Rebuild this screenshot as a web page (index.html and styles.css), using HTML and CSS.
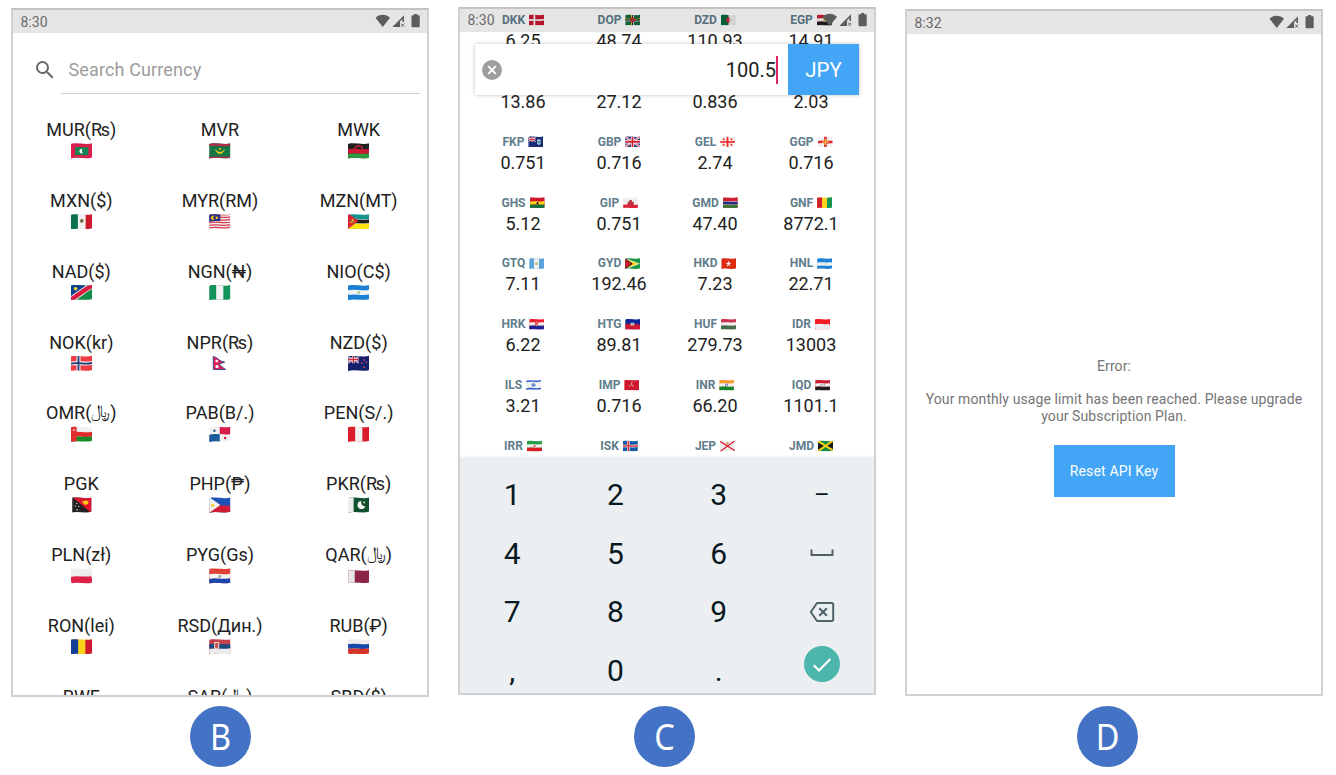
FILE: index.html
```html
<!DOCTYPE html>
<html lang="en">
<head>
<meta charset="utf-8">
<title>Currency converter screens</title>
<link rel="stylesheet" href="styles.css">
</head>
<body>
<svg class="sprite" width="0" height="0" aria-hidden="true">
<defs>
<clipPath id="wave" clipPathUnits="objectBoundingBox"><path d="M0 .09C.33-.02 .67 .17 1 .05V.93C.67 1.06 .33 .88 0 1Z"/></clipPath>
<path id="t" d="M0 4c7-2.5 14 1.5 21-1" stroke-width="5.4" fill="none"/>
<path id="m" d="M0 8.700c7-2 14 1.300 21-.8" stroke-width="4.700" fill="none"/>
<path id="b" d="M0 13.800c7-2 14 1.300 21-.8" stroke-width="5.600" fill="none"/>
<path id="h" d="M0 13c7-2 14 1.300 21-.8" stroke-width="8.500" fill="none"/>
<path id="n" d="M0 8.700c7-2 14 1.300 21-.8" stroke-width="2.400" fill="none"/>
<g id="jack"><path d="M0 0h21v16H0z" fill="#1b2f7c"/><path d="M0 1l21 14M0 15L21 1" stroke="#fff" stroke-width="3"/><path d="M0 1l21 14M0 15L21 1" stroke="#cf2338" stroke-width="1.2"/><path d="M10.500 0v16M0 8h21" stroke="#fff" stroke-width="4.600"/><path d="M10.500 0v16M0 8h21" stroke="#cf2338" stroke-width="2.600"/></g>
</defs>
<symbol id="mv" viewBox="0 0 21 16" preserveAspectRatio="none"><path d="M0 0h21v16H0z" fill="#dc1f4b"/><path d="M4 4.300c5-1 9 .5 13-.3v8c-4 1-8-.6-13 .4z" fill="#168350"/><path d="M11.300 6.200a2.200 2.200 0 1 0 0 4 3 3 0 0 1 0-4" fill="#fff"/></symbol>
<symbol id="mr" viewBox="0 0 21 16" preserveAspectRatio="none"><path d="M0 0h21v16H0z" fill="#167544"/><path d="M0 2c7-2 14 1.300 21-.8M0 15.300c7-2 14 1.300 21-.8" stroke="#b22c4a" stroke-width="2.600" fill="none"/><path d="M6.500 6.500c1 5.500 7 5.500 8.500 0-1.500 3.700-7 3.700-8.500 0" fill="#f2ce20" stroke="#f2ce20" stroke-width=".6"/><circle cx="10.700" cy="6" r="1" fill="#f2ce20"/></symbol>
<symbol id="mw" viewBox="0 0 21 16" preserveAspectRatio="none"><path d="M0 0h21v16H0z" fill="#202020"/><use href="#m" stroke="#cf1834"/><use href="#b" stroke="#2e9b3f"/><path d="M7 6a3.500 3.500 0 0 1 7 .4" fill="none" stroke="#c4203a" stroke-width="1.500"/></symbol>
<symbol id="mx" viewBox="0 0 21 16" preserveAspectRatio="none"><path d="M0 0h21v16H0z" fill="#f1f1f1"/><path d="M0 0h6.700v16H0z" fill="#0a7050"/><path d="M14.300 0H21v16h-6.700z" fill="#cf1a2e"/><circle cx="10.500" cy="8" r="2" fill="#8a8664"/><circle cx="10.500" cy="7.500" r=".9" fill="#6b452f"/></symbol>
<symbol id="my" viewBox="0 0 21 16" preserveAspectRatio="none"><path d="M0 0h21v16H0z" fill="#f1f1f1"/><path d="M0 2c7-2 14 1.300 21-.8M0 4.600c7-2 14 1.300 21-.8M0 7.200c7-2 14 1.300 21-.8M0 9.800c7-2 14 1.300 21-.8M0 12.400c7-2 14 1.300 21-.8M0 15c7-2 14 1.300 21-.8" stroke="#d83c50" stroke-width="1.250" fill="none"/><path d="M0 0h11v8.300c-4-.7-7-.5-11 .6z" fill="#24308a"/><path d="M5 2.800a2.200 2.200 0 1 0 0 4 3 3 0 0 1 0-4" fill="#fc0"/><circle cx="7.500" cy="4.700" r="1.200" fill="#fc0"/></symbol>
<symbol id="mz" viewBox="0 0 21 16" preserveAspectRatio="none"><path d="M0 0h21v16H0z" fill="#12958f"/><use href="#m" stroke="#f1f1f1"/><path d="M0 8.700c7-2 14 1.300 21-.8" stroke="#202020" stroke-width="3.700" fill="none"/><use href="#b" stroke="#fbe30f"/><path d="M0 0l10 8L0 16z" fill="#dc2434"/><path d="M1.500 9.500l3-4 2 4.500z" fill="#f2c230"/><path d="M2 7l4 3" stroke="#333" stroke-width=".8"/></symbol>
<symbol id="na" viewBox="0 0 21 16" preserveAspectRatio="none"><path d="M0 0h21v16H0z" fill="#128f46"/><path d="M0 0h21L0 16z" fill="#0b4192"/><path d="M-1 16C8 11 13 5 22 1" stroke="#f1f1f1" stroke-width="6" fill="none"/><path d="M-1 16C8 11 13 5 22 1" stroke="#d81b3c" stroke-width="4.300" fill="none"/><circle cx="4.500" cy="4.800" r="1.800" fill="#f8d424"/></symbol>
<symbol id="ng" viewBox="0 0 21 16" preserveAspectRatio="none"><path d="M0 0h21v16H0z" fill="#12935c"/><path d="M7 0h7v16H7z" fill="#f2f2f2"/></symbol>
<symbol id="ni" viewBox="0 0 21 16" preserveAspectRatio="none"><path d="M0 0h21v16H0z" fill="#1a80d4"/><use href="#m" stroke="#f4f4f4"/><circle cx="10.500" cy="8.400" r="1.400" fill="#a6c98e"/></symbol>
<symbol id="no" viewBox="0 0 21 16" preserveAspectRatio="none"><path d="M0 0h21v16H0z" fill="#ee3c42"/><path d="M7.300 0v16M0 8.700c7-2 14 1.300 21-.8" stroke="#f2f2f2" stroke-width="4" fill="none"/><path d="M7.300 0v16M0 8.700c7-2 14 1.300 21-.8" stroke="#1c3a76" stroke-width="1.800" fill="none"/></symbol>
<symbol id="np" viewBox="0 0 21 16"><path d="M4 1.500c4 .5 6 5 11.500 5.700L9.500 9c2.500 1.500 4 4 7 5.500H4z" fill="#df2454" stroke="#32408e" stroke-width=".9"/><circle cx="7.500" cy="6" r="1.300" fill="#fff"/><circle cx="7.800" cy="11.500" r="1.600" fill="#fff"/></symbol>
<symbol id="nz" viewBox="0 0 21 16" preserveAspectRatio="none"><path d="M0 0h21v16H0z" fill="#15216d"/><use href="#jack" transform="matrix(.5 0 0 .46 0 1)"/><path d="M15 4.200h1.500v1.500H15zM13 7.500h1.400V9H13zM17.300 6.500h1.400V8h-1.400zM15 11.500h1.600V13H15z" fill="#d94b6b"/></symbol>
<symbol id="om" viewBox="0 0 21 16" preserveAspectRatio="none"><path d="M0 0h21v16H0z" fill="#f1f1f1"/><use href="#m" stroke="#e02a2a"/><use href="#b" stroke="#178a25"/><path d="M0 0h5.500v16H0z" fill="#e02f2f"/><circle cx="2.800" cy="4" r="1.100" fill="#f6b6b6"/></symbol>
<symbol id="pa" viewBox="0 0 21 16" preserveAspectRatio="none"><path d="M0 0h21v16H0z" fill="#f1f1f1"/><path d="M10.500 0H21v8c-4 1-7 .2-10.500 0z" fill="#d51c48"/><path d="M0 9c4-1.300 7-1 10.500-.7V16H0z" fill="#1a5b9c"/><circle cx="5.300" cy="4.700" r="1.200" fill="#1a5b9c"/><circle cx="15.700" cy="12" r="1.200" fill="#d51c48"/></symbol>
<symbol id="pe" viewBox="0 0 21 16" preserveAspectRatio="none"><path d="M0 0h21v16H0z" fill="#da1e2e"/><path d="M7 0h7v16H7z" fill="#f2f2f2"/></symbol>
<symbol id="pg" viewBox="0 0 21 16"><path d="M1 0h19v16H1z" fill="#222"/><path d="M1 0h19v16z" fill="#de1530"/><path d="M10.500 5l4-1.800 2.800 1.300-.5 2.500-3 1z" fill="#f9c914"/><path d="M5 6h1v1H5zM3.500 8.500h1v1h-1zM7 9h1v1H7zM5.300 12.200h1.200v1.200H5.300z" fill="#fff"/></symbol>
<symbol id="ph" viewBox="0 0 21 16" preserveAspectRatio="none"><path d="M0 0h21v16H0z" fill="#1b52b6"/><use href="#h" stroke="#d01c36"/><path d="M0 0l11 8L0 16z" fill="#f3f3f3"/><circle cx="3.500" cy="8.500" r="1.700" fill="#f6d14a"/></symbol>
<symbol id="pk" viewBox="0 0 21 16" preserveAspectRatio="none"><path d="M0 0h21v16H0z" fill="#12512f"/><path d="M0 0h5.500v16H0z" fill="#ededed"/><path d="M13 4a4 4 0 1 0 4 5.500A4.200 4.200 0 0 1 13 4" fill="#f4f4f4"/><path d="M14.500 5l2-.5-.3 2.200z" fill="#fff"/></symbol>
<symbol id="pl" viewBox="0 0 21 16" preserveAspectRatio="none"><path d="M0 0h21v16H0z" fill="#ededed"/><use href="#h" stroke="#dd2148"/></symbol>
<symbol id="py" viewBox="0 0 21 16" preserveAspectRatio="none"><path d="M0 0h21v16H0z" fill="#dd4035"/><use href="#m" stroke="#f3f3f3"/><use href="#b" stroke="#1945b0"/><circle cx="10.500" cy="8.400" r="1.600" fill="#a5b3a2"/></symbol>
<symbol id="qa" viewBox="0 0 21 16"><g transform="translate(0 2) scale(1 .85)"><path d="M0 1c7-2 14 1.300 21-.8v14.500c-7 2-14-1.300-21 .8z" fill="#8e2349"/><path d="M0 1c2-.7 4-.9 6.500-.6v14.300c-2.500-.3-4.500 0-6.500.8z" fill="#e8e6e7"/></g></symbol>
<symbol id="ro" viewBox="0 0 21 16" preserveAspectRatio="none"><path d="M0 0h21v16H0z" fill="#fdd21a"/><path d="M0 0h7v16H0z" fill="#123e97"/><path d="M14 0h7v16h-7z" fill="#ce1a32"/></symbol>
<symbol id="rs" viewBox="0 0 21 16" preserveAspectRatio="none"><path d="M0 0h21v16H0z" fill="#c5404b"/><use href="#m" stroke="#1b4a80"/><use href="#b" stroke="#ececec"/><path d="M5 4h5v6l-2.500 2L5 10z" fill="#eed8d2"/><path d="M6 5h3v4.500l-1.500 1L6 9.500z" fill="#c74d4d"/></symbol>
<symbol id="ru" viewBox="0 0 21 16" preserveAspectRatio="none"><path d="M0 0h21v16H0z" fill="#ebebeb"/><use href="#m" stroke="#1548a8"/><use href="#b" stroke="#d93228"/></symbol>
<symbol id="dk" viewBox="0 0 21 16" preserveAspectRatio="none"><path d="M0 0h21v16H0z" fill="#cc1530"/><path d="M7.500 0v16" stroke="#f3f3f3" stroke-width="2.600"/><use href="#n" stroke="#f3f3f3"/></symbol>
<symbol id="dm" viewBox="0 0 21 16" preserveAspectRatio="none"><path d="M0 0h21v16H0z" fill="#146b3b"/><path d="M9 0v16M0 7.500c7-2 14 1.300 21-.8" stroke="#e6c23a" stroke-width="1.300" fill="none"/><path d="M12 0v16M0 10c7-2 14 1.300 21-.8" stroke="#e8e8e8" stroke-width="1.300" fill="none"/><path d="M10.500 0v16M0 8.700c7-2 14 1.300 21-.8" stroke="#222" stroke-width="1.300" fill="none"/><circle cx="10.500" cy="8" r="3.500" fill="#d22337"/><circle cx="10.500" cy="8" r="1.300" fill="#3c7b50"/></symbol>
<symbol id="dz" viewBox="0 0 21 16" preserveAspectRatio="none"><path d="M0 0h21v16H0z" fill="#ececec"/><path d="M0 0h10.500v16H0z" fill="#0b6a3b"/><path d="M12.500 5a3.700 3.700 0 1 0 0 6.500 4.400 4.400 0 0 1 0-6.500M11.500 7.500l3.200.6-3 1.200z" fill="#d02040"/></symbol>
<symbol id="eg" viewBox="0 0 21 16" preserveAspectRatio="none"><path d="M0 0h21v16H0z" fill="#cf1c34"/><use href="#m" stroke="#f1f1f1"/><use href="#b" stroke="#1d1d1d"/><path d="M9 6.500h3V10H9z" fill="#cbaa56"/></symbol>
<symbol id="fk" viewBox="0 0 21 16" preserveAspectRatio="none"><path d="M0 0h21v16H0z" fill="#182d74"/><use href="#jack" transform="matrix(.5 0 0 .46 0 1)"/><path d="M13 5h4.500v5.500L15.300 13 13 10.500z" fill="#d8e4e4"/><path d="M13.800 6.500h3v3l-1.500 1.500-1.500-1.500z" fill="#3c95ae"/></symbol>
<symbol id="gb" viewBox="0 0 21 16" preserveAspectRatio="none"><use href="#jack"/></symbol>
<symbol id="ge" viewBox="0 0 21 16" preserveAspectRatio="none"><path d="M0 0h21v16H0z" fill="#f3f3f3"/><path d="M3.700 4.500h3M5.200 3v3M14.500 4.500h3M16 3v3M3.700 12.200h3M5.200 10.700v3M14.500 12.200h3M16 10.700v3" stroke="#f02a2a" stroke-width="1.300"/><path d="M10.500 0v16" stroke="#f02a2a" stroke-width="2.600"/><use href="#n" stroke="#f02a2a"/></symbol>
<symbol id="gg" viewBox="0 0 21 16" preserveAspectRatio="none"><path d="M0 0h21v16H0z" fill="#f1f1f1"/><path d="M10.500 0v16M0 8.700c7-2 14 1.300 21-.8" stroke="#e2262c" stroke-width="3.600" fill="none"/><path d="M10.500 4v8.500M6 8.300h9" stroke="#f7c93a" stroke-width="1.700"/></symbol>
<symbol id="gh" viewBox="0 0 21 16" preserveAspectRatio="none"><path d="M0 0h21v16H0z" fill="#d0142c"/><use href="#m" stroke="#fdd41c"/><use href="#b" stroke="#10703e"/><path d="M10.500 5.800l2 5.200-3.800-3h4L8.500 11z" fill="#111"/></symbol>
<symbol id="gi" viewBox="0 0 21 16" preserveAspectRatio="none"><path d="M0 0h21v16H0z" fill="#efefef"/><use href="#b" stroke="#dc2036"/><path d="M6.500 11V6.500h2.500V4h3.500v2.500H15V11z" fill="#b93044"/></symbol>
<symbol id="gm" viewBox="0 0 21 16" preserveAspectRatio="none"><path d="M0 0h21v16H0z" fill="#ce2031"/><use href="#m" stroke="#eee"/><path d="M0 8.700c7-2 14 1.300 21-.8" stroke="#212a86" stroke-width="3.400" fill="none"/><use href="#b" stroke="#3b7637"/></symbol>
<symbol id="gn" viewBox="0 0 21 16" preserveAspectRatio="none"><path d="M0 0h21v16H0z" fill="#fbd31c"/><path d="M0 0h7v16H0z" fill="#d01e31"/><path d="M14 0h7v16h-7z" fill="#139657"/></symbol>
<symbol id="gt" viewBox="0 0 21 16" preserveAspectRatio="none"><path d="M0 0h21v16H0z" fill="#5ba3d9"/><path d="M7 0h7v16H7z" fill="#f1f1f1"/><circle cx="10.500" cy="8" r="2" fill="#a9b886"/></symbol>
<symbol id="gy" viewBox="0 0 21 16" preserveAspectRatio="none"><path d="M0 0h21v16H0z" fill="#149544"/><path d="M0 0l21 8L0 16z" fill="#f1f1f1"/><path d="M0 1l19 7L0 15z" fill="#fad31d"/><path d="M0 0l11 8L0 16z" fill="#222"/><path d="M0 1.500L9 8l-9 6.500z" fill="#cf1c2f"/></symbol>
<symbol id="hk" viewBox="0 0 21 16" preserveAspectRatio="none"><path d="M0 0h21v16H0z" fill="#dd2b12"/><path d="M10.500 4.500V8M7.300 7l3.200 1M13.700 7l-3.200 1M8.600 11l1.900-3M12.400 11l-1.900-3" stroke="#f4efef" stroke-width="1.600"/></symbol>
<symbol id="hn" viewBox="0 0 21 16" preserveAspectRatio="none"><path d="M0 0h21v16H0z" fill="#1d82d3"/><use href="#m" stroke="#f2f2f2"/><path d="M7 7.800h.8M13 8.200h.8M10.100 8.300h.8" stroke="#6fb0e2" stroke-width=".8"/></symbol>
<symbol id="hr" viewBox="0 0 21 16" preserveAspectRatio="none"><path d="M0 0h21v16H0z" fill="#ee1d27"/><use href="#m" stroke="#f1f1f1"/><use href="#b" stroke="#172297"/><path d="M8.300 4.500h4.400V10l-2.200 1.500L8.300 10z" fill="#e58a93"/><path d="M8.300 5h1.500v1.700H8.300zM11.200 5h1.500v1.700h-1.500zM9.800 6.700h1.400v1.700H9.800zM8.300 8.400h1.500V10H8.300zM11.200 8.400h1.500V10h-1.500z" fill="#d72a36"/></symbol>
<symbol id="ht" viewBox="0 0 21 16" preserveAspectRatio="none"><path d="M0 0h21v16H0z" fill="#0b259c"/><use href="#h" stroke="#cf1734"/><path d="M8 6.500h5v4H8z" fill="#e6e9e6"/><path d="M9 7.500h3v2H9z" fill="#54915d"/></symbol>
<symbol id="hu" viewBox="0 0 21 16" preserveAspectRatio="none"><path d="M0 0h21v16H0z" fill="#cb344d"/><use href="#m" stroke="#efefef"/><use href="#b" stroke="#41704e"/></symbol>
<symbol id="id" viewBox="0 0 21 16" preserveAspectRatio="none"><path d="M0 0h21v16H0z" fill="#f51a22"/><use href="#h" stroke="#ebebeb"/></symbol>
<symbol id="il" viewBox="0 0 21 16" preserveAspectRatio="none"><path d="M0 0h21v16H0z" fill="#f1f1f1"/><path d="M0 3.300c7-2 14 1.300 21-.8M0 13.900c7-2 14 1.300 21-.8" stroke="#2956c6" stroke-width="2" fill="none"/><path d="M10.500 5.800l2.300 3.800H8.200zM10.500 10.900L8.200 7.100h4.600z" fill="none" stroke="#2956c6" stroke-width=".8"/></symbol>
<symbol id="im" viewBox="0 0 21 16" preserveAspectRatio="none"><path d="M0 0h21v16H0z" fill="#cf172e"/><path d="M10.500 8V5l1.800-.5M10.500 8l2.500 1.200-.5 1.500M10.500 8l-2.500 2-1.500-.8" fill="none" stroke="#ddb3af" stroke-width="1.200"/></symbol>
<symbol id="in" viewBox="0 0 21 16" preserveAspectRatio="none"><path d="M0 0h21v16H0z" fill="#f99a2d"/><use href="#m" stroke="#f1f1f1"/><use href="#b" stroke="#16862b"/><circle cx="10.500" cy="8.400" r="1.600" fill="none" stroke="#3940a5" stroke-width=".9"/></symbol>
<symbol id="iq" viewBox="0 0 21 16" preserveAspectRatio="none"><path d="M0 0h21v16H0z" fill="#cf1b32"/><use href="#m" stroke="#f1f1f1"/><use href="#b" stroke="#1d1d1d"/><path d="M7 8.200h7" stroke="#5aa077" stroke-width="1.300" stroke-dasharray="1.800 .8"/></symbol>
<symbol id="ir" viewBox="0 0 21 16" preserveAspectRatio="none"><path d="M0 0h21v16H0z" fill="#24a04b"/><use href="#m" stroke="#f1f1f1"/><use href="#b" stroke="#da1a20"/><circle cx="10.500" cy="8.300" r="1.500" fill="#da3a3f"/></symbol>
<symbol id="is" viewBox="0 0 21 16" preserveAspectRatio="none"><path d="M0 0h21v16H0z" fill="#165aa5"/><path d="M7.500 0v16M0 8.700c7-2 14 1.300 21-.8" stroke="#efefef" stroke-width="3.800" fill="none"/><path d="M7.500 0v16M0 8.700c7-2 14 1.300 21-.8" stroke="#dc2536" stroke-width="1.900" fill="none"/></symbol>
<symbol id="je" viewBox="0 0 21 16" preserveAspectRatio="none"><path d="M0 0h21v16H0z" fill="#ececec"/><path d="M0 2l21 13M0 16L21 1" stroke="#dd1f3b" stroke-width="1.900"/><path d="M9 3h3v2.500l-1.500 1L9 5.500z" fill="#e0903a"/></symbol>
<symbol id="jm" viewBox="0 0 21 16" preserveAspectRatio="none"><path d="M0 0h21v16H0z" fill="#148b3c"/><path d="M0 1l9.500 7L0 16zM21 0l-9.500 8L21 15z" fill="#1b1b1b"/><path d="M0 1.500l21 13M0 15.500L21 1" stroke="#fcd21b" stroke-width="2.600"/></symbol>
<symbol id="status" viewBox="0 0 46 16"><path d="M.5 4.700C4.500.8 11 .8 15 4.700L7.750 14z" fill="#5c5c5c"/><path d="M17.300 14L29 2.200V9h-1.600V6L25 8.500V14z" fill="#5c5c5c"/><path d="M26.200 10.600l2.800 3.100m0-3.100l-2.800 3.100" stroke="#5c5c5c" stroke-width="1"/><path d="M39 1h3.200v1.200h1.500c.6 0 1 .4 1 1v10c0 .6-.4 1-1 1h-6.200c-.6 0-1-.4-1-1v-10c0-.6.4-1 1-1H39z" fill="#5c5c5c"/></symbol>
</svg>

<main class="board">
<section class="phone phone-list">
<header class="status"><span>8:30</span><svg class="status-icons"><use href="#status"/></svg></header>
<div class="search">
<svg class="search-icon" viewBox="0 0 24 24"><path d="M15.500 14h-.79l-.28-.27A6.471 6.471 0 0 0 16 9.500 6.500 6.500 0 1 0 9.500 16c1.610 0 3.090-.59 4.230-1.570l.27.28v.79l5 4.990L20.490 19l-4.990-5zm-6 0C7.010 14 5 11.990 5 9.500S7.010 5 9.500 5 14 7.010 14 9.500 11.990 14 9.500 14z"/></svg>
<div class="search-field">Search Currency</div>
</div>
<div class="currencies">
<div class="currency">MUR(₨)<svg class="flag"><use href="#mv"/></svg></div>
<div class="currency">MVR<svg class="flag"><use href="#mr"/></svg></div>
<div class="currency">MWK<svg class="flag"><use href="#mw"/></svg></div>
<div class="currency">MXN($)<svg class="flag"><use href="#mx"/></svg></div>
<div class="currency">MYR(RM)<svg class="flag"><use href="#my"/></svg></div>
<div class="currency">MZN(MT)<svg class="flag"><use href="#mz"/></svg></div>
<div class="currency">NAD($)<svg class="flag"><use href="#na"/></svg></div>
<div class="currency">NGN(₦)<svg class="flag"><use href="#ng"/></svg></div>
<div class="currency">NIO(C$)<svg class="flag"><use href="#ni"/></svg></div>
<div class="currency">NOK(kr)<svg class="flag"><use href="#no"/></svg></div>
<div class="currency">NPR(₨)<svg class="flag flag-free"><use href="#np"/></svg></div>
<div class="currency">NZD($)<svg class="flag"><use href="#nz"/></svg></div>
<div class="currency"><span>OMR(<bdi class="rial">﷼</bdi>)</span><svg class="flag"><use href="#om"/></svg></div>
<div class="currency">PAB(B/.)<svg class="flag"><use href="#pa"/></svg></div>
<div class="currency">PEN(S/.)<svg class="flag"><use href="#pe"/></svg></div>
<div class="currency">PGK<svg class="flag"><use href="#pg"/></svg></div>
<div class="currency">PHP(₱)<svg class="flag"><use href="#ph"/></svg></div>
<div class="currency">PKR(₨)<svg class="flag"><use href="#pk"/></svg></div>
<div class="currency">PLN(zł)<svg class="flag"><use href="#pl"/></svg></div>
<div class="currency">PYG(Gs)<svg class="flag"><use href="#py"/></svg></div>
<div class="currency"><span>QAR(<bdi class="rial">﷼</bdi>)</span><svg class="flag flag-free"><use href="#qa"/></svg></div>
<div class="currency">RON(lei)<svg class="flag"><use href="#ro"/></svg></div>
<div class="currency">RSD(Дин.)<svg class="flag"><use href="#rs"/></svg></div>
<div class="currency">RUB(₽)<svg class="flag"><use href="#ru"/></svg></div>
<div class="currency">RWF</div>
<div class="currency"><span>SAR(<bdi class="rial">﷼</bdi>)</span></div>
<div class="currency">SBD($)</div>
</div>
</section>

<section class="phone phone-convert">
<div class="rates">
<div class="rate"><b>DKK<svg class="flag"><use href="#dk"/></svg></b>6.25</div>
<div class="rate"><b>DOP<svg class="flag"><use href="#dm"/></svg></b>48.74</div>
<div class="rate"><b>DZD<svg class="flag"><use href="#dz"/></svg></b>110.93</div>
<div class="rate"><b>EGP<svg class="flag"><use href="#eg"/></svg></b>14.91</div>
<div class="rate"><b></b>13.86</div>
<div class="rate"><b></b>27.12</div>
<div class="rate"><b></b>0.836</div>
<div class="rate"><b></b>2.03</div>
<div class="rate"><b>FKP<svg class="flag"><use href="#fk"/></svg></b>0.751</div>
<div class="rate"><b>GBP<svg class="flag"><use href="#gb"/></svg></b>0.716</div>
<div class="rate"><b>GEL<svg class="flag"><use href="#ge"/></svg></b>2.74</div>
<div class="rate"><b>GGP<svg class="flag"><use href="#gg"/></svg></b>0.716</div>
<div class="rate"><b>GHS<svg class="flag"><use href="#gh"/></svg></b>5.12</div>
<div class="rate"><b>GIP<svg class="flag"><use href="#gi"/></svg></b>0.751</div>
<div class="rate"><b>GMD<svg class="flag"><use href="#gm"/></svg></b>47.40</div>
<div class="rate"><b>GNF<svg class="flag"><use href="#gn"/></svg></b>8772.1</div>
<div class="rate"><b>GTQ<svg class="flag"><use href="#gt"/></svg></b>7.11</div>
<div class="rate"><b>GYD<svg class="flag"><use href="#gy"/></svg></b>192.46</div>
<div class="rate"><b>HKD<svg class="flag"><use href="#hk"/></svg></b>7.23</div>
<div class="rate"><b>HNL<svg class="flag"><use href="#hn"/></svg></b>22.71</div>
<div class="rate"><b>HRK<svg class="flag"><use href="#hr"/></svg></b>6.22</div>
<div class="rate"><b>HTG<svg class="flag"><use href="#ht"/></svg></b>89.81</div>
<div class="rate"><b>HUF<svg class="flag"><use href="#hu"/></svg></b>279.73</div>
<div class="rate"><b>IDR<svg class="flag"><use href="#id"/></svg></b>13003</div>
<div class="rate"><b>ILS<svg class="flag"><use href="#il"/></svg></b>3.21</div>
<div class="rate"><b>IMP<svg class="flag"><use href="#im"/></svg></b>0.716</div>
<div class="rate"><b>INR<svg class="flag"><use href="#in"/></svg></b>66.20</div>
<div class="rate"><b>IQD<svg class="flag"><use href="#iq"/></svg></b>1101.1</div>
<div class="rate"><b>IRR<svg class="flag"><use href="#ir"/></svg></b></div>
<div class="rate"><b>ISK<svg class="flag"><use href="#is"/></svg></b></div>
<div class="rate"><b>JEP<svg class="flag"><use href="#je"/></svg></b></div>
<div class="rate"><b>JMD<svg class="flag"><use href="#jm"/></svg></b></div>
</div>
<header class="status"><span>8:30</span><svg class="status-icons"><use href="#status"/></svg></header>
<div class="amount">
<svg class="clear" viewBox="0 0 20 20"><circle cx="10" cy="10" r="10" fill="#9e9e9e"/><path d="M6.200 6.200l7.600 7.600m0-7.600l-7.600 7.600" stroke="#fff" stroke-width="1.900"/></svg>
<span class="amount-value">100.5</span>
<span class="amount-code">JPY</span>
</div>
<div class="keypad">
<span>1</span><span>2</span><span>3</span><span class="dash">–</span>
<span>4</span><span>5</span><span>6</span><span><svg class="key-space" viewBox="0 0 24 8"><path d="M1.500 .5V6h21V.5" fill="none" stroke="#50616a" stroke-width="2"/></svg></span>
<span>7</span><span>8</span><span>9</span><span><svg class="key-delete" viewBox="0 0 26 22"><path d="M8 2h14.500c1 0 1.700.7 1.700 1.700v14.600c0 1-.7 1.700-1.700 1.700H8L1.800 11z" fill="none" stroke="#50616a" stroke-width="2" stroke-linejoin="round"/><path d="M10.300 7.200l7.600 7.600m0-7.600l-7.600 7.600" stroke="#50616a" stroke-width="2"/></svg></span>
<span>,</span><span>0</span><span>.</span><span class="enter"><svg class="key-enter" viewBox="0 0 36 36"><circle cx="18" cy="18" r="18" fill="#4db6ac"/><path d="M9.800 19.300l5.200 5.200L26.300 13" fill="none" stroke="#fff" stroke-width="2.200"/></svg></span>
</div>
</section>

<section class="phone phone-error">
<header class="status"><span>8:32</span><svg class="status-icons"><use href="#status"/></svg></header>
<div class="error">
<p class="error-title">Error:</p>
<p class="error-text">Your monthly usage limit has been reached. Please upgrade<br>your Subscription Plan.</p>
<button class="reset" type="button">Reset API Key</button>
</div>
</section>
</main>
<footer class="badges"><div class="badge"><span>B</span></div><div class="badge"><span>C</span></div><div class="badge"><span>D</span></div></footer>
</body>
</html>
```
FILE: styles.css
```css
* { box-sizing: border-box; }
body {
  margin: 0;
  width: 1336px;
  height: 775px;
  overflow: hidden;
  background: #fff;
  font-family: Roboto, "Liberation Sans", sans-serif;
  color: #212121;
}
.sprite { position: absolute; }
.board {
  display: flex;
  gap: 29px;
  align-items: flex-start;
  height: 706px;
  padding-left: 11px;
}
.phone {
  position: relative;
  width: 418px;
  border: 2px solid #d0d0d0;
  border-top-color: #c4c4c4;
  overflow: hidden;
  background: #fff;
}
.phone-list { margin-top: 8px; height: 689px; }
.phone-convert { margin-top: 7px; height: 688px; display: flex; flex-direction: column; }
.phone-error { margin-top: 9px; height: 687px; display: flex; flex-direction: column; }
.status {
  flex: none;
  display: flex;
  justify-content: space-between;
  align-items: center;
  height: 23px;
  padding: 0 6px 0 7.500px;
  background: rgba(0, 0, 0, .102);
  color: #6a6a6a;
  font-size: 14px;
  line-height: 23px;
}
.status-icons { width: 46px; height: 16px; margin-bottom: 1px; }
.phone-convert .status { position: absolute; top: 0; left: 0; right: 0; }
.phone-list .status, .phone-error .status { line-height: 24px; }

.search {
  display: flex;
  align-items: center;
  height: 48px;
  margin-top: 13px;
  padding: 0 7px 0 19.500px;
}
.search-icon { width: 24px; height: 24px; margin-right: 4px; fill: #686868; }
.search-field {
  flex: 1;
  height: 48px;
  padding-left: 8px;
  border-bottom: 1px solid #cfcfcf;
  color: #9c9c9c;
  font-size: 18px;
  line-height: 48px;
  letter-spacing: .13px;
}
.currencies {
  display: grid;
  grid-template-columns: repeat(3, 1fr);
  grid-auto-rows: 70.850px;
  width: 416px;
  margin-left: -1px;
  padding-top: 25px;
}
.currency {
  display: flex;
  flex-direction: column;
  align-items: center;
  gap: 2.500px;
  font-size: 18px;
  line-height: 21px;
}
.rial {
  font-family: "DejaVu Sans", sans-serif;
  font-size: 17px;
  line-height: 1;
  vertical-align: 2px;
}
.flag { display: block; width: 21.500px; height: 16px; clip-path: url(#wave); }
.flag-free { clip-path: none; }

.rates {
  flex: none;
  display: grid;
  grid-template-columns: repeat(4, 96px);
  grid-auto-rows: 60.850px;
  height: 449px;
  padding: 4px 15px 0;
  overflow: hidden;
}
.rate {
  display: flex;
  flex-direction: column;
  align-items: center;
  gap: 3px;
  font-size: 18px;
  line-height: 21px;
}
.rate b {
  display: flex;
  align-items: center;
  gap: 4px;
  height: 14px;
  color: #607d8b;
  font-size: 12px;
  line-height: 14px;
}
.rate .flag { width: 15px; height: 11.500px; }
.amount {
  position: absolute;
  top: 35px;
  left: 15px;
  display: flex;
  align-items: center;
  width: 384px;
  height: 51px;
  background: #fff;
  box-shadow: 0 0 4px rgba(0, 0, 0, .25);
}
.clear { width: 20px; height: 20px; margin-left: 7px; }
.amount-value {
  flex: 1;
  margin: 1px 10px 0 0;
  border-right: 2px solid #e0245e;
  font-size: 20px;
  line-height: 28px;
  text-align: right;
}
.amount-code {
  width: 71px;
  height: 51px;
  background: #42a5f5;
  color: #fff;
  font-size: 20.500px;
  line-height: 53px;
  text-align: center;
}
.keypad {
  flex: none;
  position: relative;
  display: grid;
  grid-template-columns: repeat(4, 1fr);
  grid-auto-rows: 58.500px;
  height: 235px;
  padding: 7.500px .5px 0 .5px;
  background: #eceff1;
  box-shadow: 0 0 3px rgba(0, 0, 0, .15);
  color: #07191f;
  font-size: 30px;
}
.keypad span { display: flex; align-items: center; justify-content: center; }
.keypad .dash { font-size: 24px; }
.keypad .enter { padding-bottom: 13px; }
.key-space { width: 24px; height: 8px; }
.key-delete { width: 26px; height: 22px; }
.key-enter { width: 36px; height: 36px; }

.error {
  display: flex;
  flex-direction: column;
  align-items: center;
  padding-top: 324px;
  color: #757575;
  font-size: 14px;
  line-height: 16.500px;
  letter-spacing: .1px;
  text-align: center;
}
.error p { margin: 0; }
.error .error-text { margin-top: 16.500px; }
.reset {
  width: 121px;
  height: 52px;
  margin-top: 21px;
  padding: 0;
  border: 0;
  background: #42a5f5;
  color: #fff;
  font: 14px Roboto, "Liberation Sans", sans-serif;
  letter-spacing: .15px;
}
.badges { display: flex; gap: 382.500px; padding-left: 190px; }
.badge {
  width: 61px;
  height: 61px;
  border-radius: 50%;
  background: #4472c4;
  color: #fff;
  font: 36px/61px "Noto Sans", "Open Sans", sans-serif;
  text-align: center;
}
.badge span { display: block; transform: scaleX(.9); }
```
